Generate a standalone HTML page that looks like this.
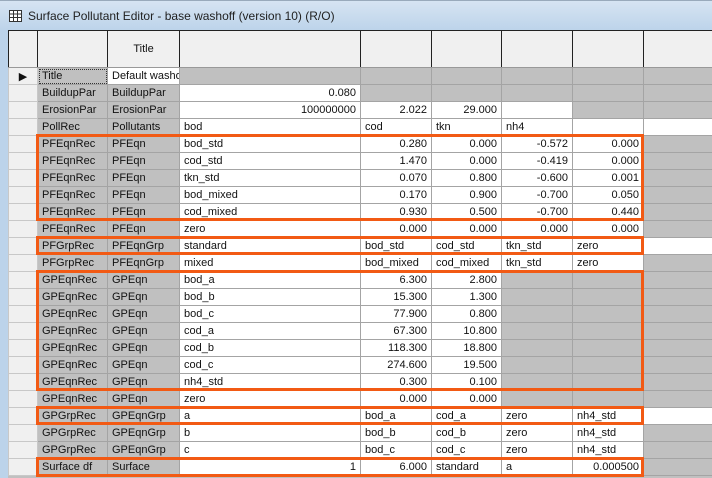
<!DOCTYPE html><html><head><style>
body{margin:0;width:712px;height:478px;overflow:hidden;background:#c0c0c0;font-family:"Liberation Sans",sans-serif;font-size:11px;position:relative}
.tb{position:absolute;left:0;top:0;width:712px;height:30px;background:linear-gradient(#d6e4f2,#bcd3ea);border-top:1px solid #9ab}
.tb span{position:absolute;left:28px;top:8px;font-size:12px;color:#222}
.lb{position:absolute;left:0;top:30px;width:8px;height:448px;background:#bcd3ea}
table{position:absolute;left:8px;top:30px;border-collapse:collapse;table-layout:fixed;width:704px}
td{height:16px;padding:0 4px;border:1px solid #a4a4a4;white-space:nowrap;overflow:hidden;color:#111;background:#c0c0c0}
tr.h td{height:36px;background:#f0f0f0;border-color:#222;text-align:center;border-bottom:1px solid #999}
td:first-child{background:#f0f0f0;border-color:#c8c8c8}
td.w{background:#fff}.r{text-align:right}
td:nth-child(3){border-left:1px solid #444}
.o{position:absolute;border:3px solid #f25a14;box-sizing:border-box}
</style></head><body>
<div class="tb"><svg style="position:absolute;left:9px;top:9px" width="13" height="12"><rect x=".5" y=".5" width="12" height="11" fill="#fff" stroke="#333"/><path d="M.5 4h12M.5 7.5h12M4.5 .5v11M8.5 .5v11" stroke="#333"/></svg><span>Surface Pollutant Editor - base washoff (version 10) (R/O)</span></div>
<div class="lb"></div>
<table>
<colgroup><col width="29"><col width="70"><col width="72"><col width="181"><col width="71"><col width="70"><col width="71"><col width="71"><col width="69"></colgroup>
<tr class="h"><td></td><td></td><td>Title</td><td></td><td></td><td></td><td></td><td></td><td></td></tr>
<tr><td style="text-align:center">&#9654;</td><td style="outline:1px dotted #333;outline-offset:-2px">Title</td><td class="w">Default washoff</td><td></td><td></td><td></td><td></td><td></td><td></td></tr>
<tr><td></td><td>BuildupPar</td><td>BuildupPar</td><td class="w r">0.080</td><td></td><td></td><td></td><td></td><td></td></tr>
<tr><td></td><td>ErosionPar</td><td>ErosionPar</td><td class="w r">100000000</td><td class="w r">2.022</td><td class="w r">29.000</td><td class="w"></td><td></td><td></td></tr>
<tr><td></td><td>PollRec</td><td>Pollutants</td><td class="w">bod</td><td class="w">cod</td><td class="w">tkn</td><td class="w">nh4</td><td class="w"></td><td class="w"></td></tr>
<tr><td></td><td>PFEqnRec</td><td>PFEqn</td><td class="w">bod_std</td><td class="w r">0.280</td><td class="w r">0.000</td><td class="w r">-0.572</td><td class="w r">0.000</td><td></td></tr>
<tr><td></td><td>PFEqnRec</td><td>PFEqn</td><td class="w">cod_std</td><td class="w r">1.470</td><td class="w r">0.000</td><td class="w r">-0.419</td><td class="w r">0.000</td><td></td></tr>
<tr><td></td><td>PFEqnRec</td><td>PFEqn</td><td class="w">tkn_std</td><td class="w r">0.070</td><td class="w r">0.800</td><td class="w r">-0.600</td><td class="w r">0.001</td><td></td></tr>
<tr><td></td><td>PFEqnRec</td><td>PFEqn</td><td class="w">bod_mixed</td><td class="w r">0.170</td><td class="w r">0.900</td><td class="w r">-0.700</td><td class="w r">0.050</td><td></td></tr>
<tr><td></td><td>PFEqnRec</td><td>PFEqn</td><td class="w">cod_mixed</td><td class="w r">0.930</td><td class="w r">0.500</td><td class="w r">-0.700</td><td class="w r">0.440</td><td></td></tr>
<tr><td></td><td>PFEqnRec</td><td>PFEqn</td><td class="w">zero</td><td class="w r">0.000</td><td class="w r">0.000</td><td class="w r">0.000</td><td class="w r">0.000</td><td></td></tr>
<tr><td></td><td>PFGrpRec</td><td>PFEqnGrp</td><td class="w">standard</td><td class="w">bod_std</td><td class="w">cod_std</td><td class="w">tkn_std</td><td class="w">zero</td><td class="w"></td></tr>
<tr><td></td><td>PFGrpRec</td><td>PFEqnGrp</td><td class="w">mixed</td><td class="w">bod_mixed</td><td class="w">cod_mixed</td><td class="w">tkn_std</td><td class="w">zero</td><td></td></tr>
<tr><td></td><td>GPEqnRec</td><td>GPEqn</td><td class="w">bod_a</td><td class="w r">6.300</td><td class="w r">2.800</td><td></td><td></td><td></td></tr>
<tr><td></td><td>GPEqnRec</td><td>GPEqn</td><td class="w">bod_b</td><td class="w r">15.300</td><td class="w r">1.300</td><td></td><td></td><td></td></tr>
<tr><td></td><td>GPEqnRec</td><td>GPEqn</td><td class="w">bod_c</td><td class="w r">77.900</td><td class="w r">0.800</td><td></td><td></td><td></td></tr>
<tr><td></td><td>GPEqnRec</td><td>GPEqn</td><td class="w">cod_a</td><td class="w r">67.300</td><td class="w r">10.800</td><td></td><td></td><td></td></tr>
<tr><td></td><td>GPEqnRec</td><td>GPEqn</td><td class="w">cod_b</td><td class="w r">118.300</td><td class="w r">18.800</td><td></td><td></td><td></td></tr>
<tr><td></td><td>GPEqnRec</td><td>GPEqn</td><td class="w">cod_c</td><td class="w r">274.600</td><td class="w r">19.500</td><td></td><td></td><td></td></tr>
<tr><td></td><td>GPEqnRec</td><td>GPEqn</td><td class="w">nh4_std</td><td class="w r">0.300</td><td class="w r">0.100</td><td></td><td></td><td></td></tr>
<tr><td></td><td>GPEqnRec</td><td>GPEqn</td><td class="w">zero</td><td class="w r">0.000</td><td class="w r">0.000</td><td></td><td></td><td></td></tr>
<tr><td></td><td>GPGrpRec</td><td>GPEqnGrp</td><td class="w">a</td><td class="w">bod_a</td><td class="w">cod_a</td><td class="w">zero</td><td class="w">nh4_std</td><td class="w"></td></tr>
<tr><td></td><td>GPGrpRec</td><td>GPEqnGrp</td><td class="w">b</td><td class="w">bod_b</td><td class="w">cod_b</td><td class="w">zero</td><td class="w">nh4_std</td><td></td></tr>
<tr><td></td><td>GPGrpRec</td><td>GPEqnGrp</td><td class="w">c</td><td class="w">bod_c</td><td class="w">cod_c</td><td class="w">zero</td><td class="w">nh4_std</td><td></td></tr>
<tr><td></td><td>Surface df</td><td>Surface</td><td class="w r">1</td><td class="w r">6.000</td><td class="w">standard</td><td class="w">a</td><td class="w r">0.000500</td><td></td></tr>
</table>
<div class="o" style="left:36px;top:134px;width:608px;height:87px"></div>
<div class="o" style="left:36px;top:236px;width:608px;height:19px"></div>
<div class="o" style="left:36px;top:270px;width:608px;height:121px"></div>
<div class="o" style="left:36px;top:406px;width:608px;height:19px"></div>
<div class="o" style="left:36px;top:457px;width:608px;height:20px"></div>
</body></html>
